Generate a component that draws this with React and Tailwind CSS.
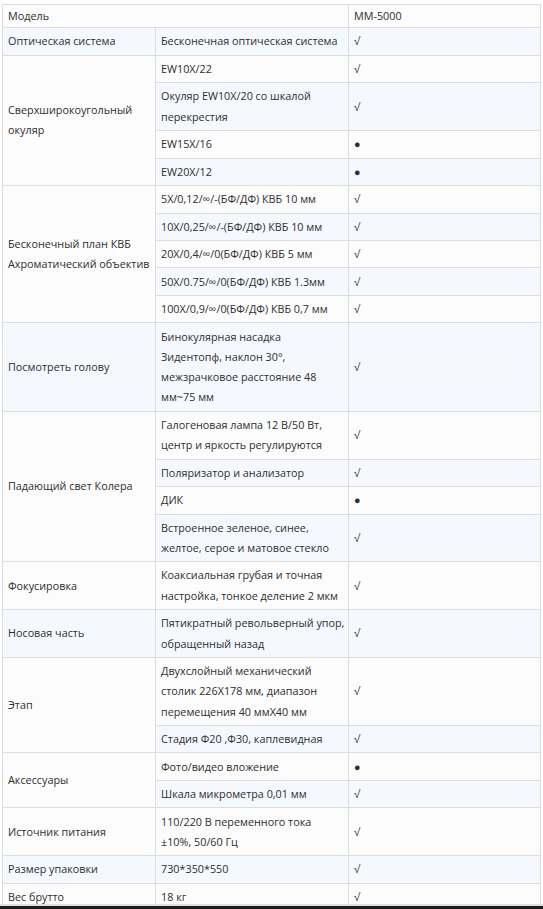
import React from 'react';

const rows = [
  { group: ['Модель'], span: 1, value: null, mark: 'MM-5000', head: true },
  { group: ['Оптическая система'], span: 1, value: ['Бесконечная оптическая система'], mark: '√' },
  { group: ['Сверхширокоугольный', 'окуляр'], span: 4, value: ['EW10X/22'], mark: '√' },
  { value: ['Окуляр EW10X/20 со шкалой', 'перекрестия'], mark: '√' },
  { value: ['EW15X/16'], mark: '●' },
  { value: ['EW20X/12'], mark: '●' },
  { group: ['Бесконечный план КВБ', 'Ахроматический объектив'], span: 5, value: ['5X/0,12/∞/-(БФ/ДФ) КВБ 10 мм'], mark: '√' },
  { value: ['10X/0,25/∞/-(БФ/ДФ) КВБ 10 мм'], mark: '√' },
  { value: ['20X/0,4/∞/0(БФ/ДФ) КВБ 5 мм'], mark: '√' },
  { value: ['50X/0.75/∞/0(БФ/ДФ) КВБ 1.3мм'], mark: '√' },
  { value: ['100X/0,9/∞/0(БФ/ДФ) КВБ 0,7 мм'], mark: '√' },
  { group: ['Посмотреть голову'], span: 1, value: ['Бинокулярная насадка', 'Зидентопф, наклон 30°,', 'межзрачковое расстояние 48', 'мм~75 мм'], mark: '√' },
  { group: ['Падающий свет Колера'], span: 4, value: ['Галогеновая лампа 12 В/50 Вт,', 'центр и яркость регулируются'], mark: '√' },
  { value: ['Поляризатор и анализатор'], mark: '√' },
  { value: ['ДИК'], mark: '●' },
  { value: ['Встроенное зеленое, синее,', 'желтое, серое и матовое стекло'], mark: '√' },
  { group: ['Фокусировка'], span: 1, value: ['Коаксиальная грубая и точная', 'настройка, тонкое деление 2 мкм'], mark: '√' },
  { group: ['Носовая часть'], span: 1, value: ['Пятикратный револьверный упор,', 'обращенный назад'], mark: '√' },
  { group: ['Этап'], span: 2, value: ['Двухслойный механический', 'столик 226X178 мм, диапазон', 'перемещения 40 ммX40 мм'], mark: '√' },
  { value: ['Стадия Φ20 ,Φ30, каплевидная'], mark: '√' },
  { group: ['Аксессуары'], span: 2, value: ['Фото/видео вложение'], mark: '●' },
  { value: ['Шкала микрометра 0,01 мм'], mark: '√' },
  { group: ['Источник питания'], span: 1, value: ['110/220 В переменного тока', '±10%, 50/60 Гц'], mark: '√' },
  { group: ['Размер упаковки'], span: 1, value: ['730*350*550'], mark: '√' },
  { group: ['Вес брутто'], span: 1, value: ['18 кг'], mark: '√' },
];

const Lines = ({ lines }) => (
  <>
    {lines.map((l, i) => (
      <div key={i} className="whitespace-nowrap">{l}</div>
    ))}
  </>
);

export default function App() {
  return (
    <div className="w-[543px] h-[909px] bg-white flex flex-col" style={{ fontFamily: '"Open Sans", "Noto Sans", sans-serif' }}>
      <div className="h-[904px] overflow-hidden pt-[4px] pl-[2px]">
        <table className="table-fixed border-collapse w-[538px] text-[10.8px] leading-[20.3px] text-[#2e2e2e]">
          <colgroup>
            <col className="w-[153px]" />
            <col className="w-[193px]" />
            <col className="w-[192px]" />
          </colgroup>
          <tbody>
            {rows.map((r, i) => {
              const bg = i % 2 ? 'bg-[#f5f9ff]' : 'bg-[#fcfcfc]';
              const cell = 'border border-[#dddddd] align-middle pl-[5px] pr-[4px] py-[3.1px]';
              return (
                <tr key={i} className={bg}>
                  {r.head ? (
                    <td colSpan={2} className={`${cell} ${bg} !py-[1px]`}>
                      <Lines lines={r.group} />
                    </td>
                  ) : (
                    <>
                      {r.group && (
                        <td rowSpan={r.span} className={`${cell} ${bg}`}>
                          <Lines lines={r.group} />
                        </td>
                      )}
                      <td className={cell}>
                        <Lines lines={r.value} />
                      </td>
                    </>
                  )}
                  <td className={`${cell} ${r.head ? '!py-[1px]' : ''}`}>{r.mark}</td>
                </tr>
              );
            })}
          </tbody>
        </table>
      </div>
      <div className="h-[2px] bg-[#e2e2e2]" />
      <div className="h-[3px] bg-[#1c1c1c]" />
    </div>
  );
}
